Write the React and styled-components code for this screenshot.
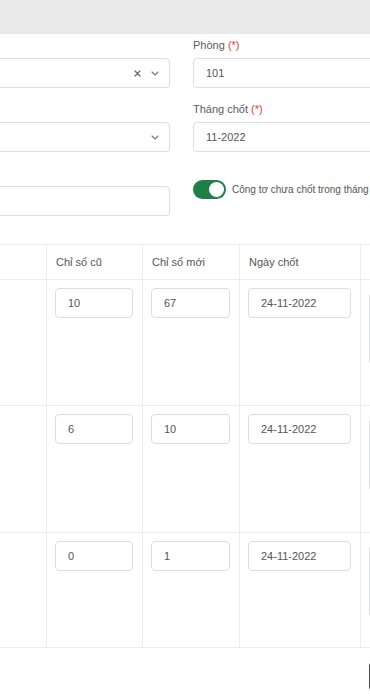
import React from "react";
import styled, { createGlobalStyle } from "styled-components";

const GlobalStyle = createGlobalStyle`
  html, body { margin: 0; padding: 0; background: #fff; overflow: hidden; }
  body { font-family: "Liberation Sans", Arial, sans-serif; color: #555; }
  * { box-sizing: border-box; }
`;

const TopBar = styled.div`
  height: 34px;
  background: #e9e9e9;
`;

const Content = styled.div`
  margin-left: -150px;
  width: 700px;
`;

const FormGrid = styled.div`
  display: grid;
  grid-template-columns: 320px 300px;
  column-gap: 23px;
  row-gap: 14px;
  padding-top: 4px;
`;

const Field = styled.div`
  display: flex;
  flex-direction: column;
`;

const Label = styled.div`
  height: 14px;
  line-height: 14px;
  font-size: 11px;
  color: #5c5c5c;
  margin-bottom: 6px;
`;

const Req = styled.span`
  color: #e53935;
`;

const Box = styled.div`
  height: 30px;
  border: 1px solid #dcdde3;
  border-radius: 4px;
  background: #fff;
  display: flex;
  align-items: center;
  padding: 0 12px;
  font-size: 11px;
  color: #555;
`;

const BoxText = styled.span`
  flex: 1;
`;

const Icons = styled.span`
  display: flex;
  align-items: center;
  gap: 10px;
  color: #777;
  margin-right: -2px;
`;

const ToggleRow = styled.div`
  display: flex;
  align-items: center;
  gap: 6px;
  margin-top: 14px;
`;

const Switch = styled.span`
  width: 33px;
  height: 19px;
  border-radius: 10px;
  background: #1f7f47;
  display: flex;
  align-items: center;
  justify-content: flex-end;
  padding: 0 2px;
`;

const Knob = styled.span`
  width: 15px;
  height: 15px;
  border-radius: 50%;
  background: #fff;
`;

const ToggleText = styled.span`
  font-size: 10px;
  color: #555;
  white-space: nowrap;
`;

const Table = styled.table`
  margin-top: 28px;
  border-collapse: collapse;
  table-layout: fixed;
  width: 700px;
`;

const Th = styled.th`
  height: 35px;
  border: 1px solid #ececf1;
  text-align: left;
  font-weight: normal;
  font-size: 11px;
  color: #555;
  padding: 0 9px;
`;

const Tr = styled.tr`
  height: ${(p) => p.$h}px;
`;

const Td = styled.td`
  border: 1px solid #ececf1;
  vertical-align: top;
  padding: 8px 9px 8px 8px;
`;

const CellInput = styled(Box)`
  width: 100%;
`;

const Note = styled.div`
  margin-top: 4px;
  height: 73px;
  border: 1px solid #dcdde3;
  border-radius: 4px;
`;

const Footer = styled.div`
  display: flex;
  padding-top: 15px;
  padding-left: 519px;
`;

const DarkButton = styled.div`
  width: 80px;
  height: 27px;
  border-radius: 3px;
  background: #4a4a4a;
`;

const Chevron = () => (
  <svg width="8" height="5" viewBox="0 0 8 5" fill="none">
    <path d="M1 1l3 3 3-3" stroke="#777" strokeWidth="1.1" strokeLinecap="round" strokeLinejoin="round" />
  </svg>
);

const Cross = () => (
  <svg width="7" height="7" viewBox="0 0 7 7" fill="none">
    <path d="M1 1l5 5M6 1L1 6" stroke="#666" strokeWidth="1.2" strokeLinecap="round" />
  </svg>
);

const rows = [
  { old: "10", now: "67", date: "24-11-2022", h: 126 },
  { old: "6", now: "10", date: "24-11-2022", h: 127 },
  { old: "0", now: "1", date: "24-11-2022", h: 115 },
];

export default function App() {
  return (
    <>
      <GlobalStyle />
      <TopBar />
      <Content>
        <FormGrid>
          <Field>
            <Label />
            <Box>
              <BoxText />
              <Icons>
                <Cross />
                <Chevron />
              </Icons>
            </Box>
          </Field>
          <Field>
            <Label>
              Phòng <Req>(*)</Req>
            </Label>
            <Box>
              <BoxText>101</BoxText>
            </Box>
          </Field>
          <Field>
            <Label />
            <Box>
              <BoxText />
              <Icons>
                <Chevron />
              </Icons>
            </Box>
          </Field>
          <Field>
            <Label>
              Tháng chốt <Req>(*)</Req>
            </Label>
            <Box>
              <BoxText>11-2022</BoxText>
            </Box>
          </Field>
          <Field>
            <Label />
            <Box />
          </Field>
          <Field>
            <ToggleRow>
              <Switch>
                <Knob />
              </Switch>
              <ToggleText>Công tơ chưa chốt trong tháng</ToggleText>
            </ToggleRow>
          </Field>
        </FormGrid>
        <Table>
          <colgroup>
            <col style={{ width: 196 }} />
            <col style={{ width: 96 }} />
            <col style={{ width: 97 }} />
            <col style={{ width: 121 }} />
            <col />
          </colgroup>
          <thead>
            <tr>
              <Th />
              <Th>Chỉ số cũ</Th>
              <Th>Chỉ số mới</Th>
              <Th>Ngày chốt</Th>
              <Th />
            </tr>
          </thead>
          <tbody>
            {rows.map((r, i) => (
              <Tr key={i} $h={r.h}>
                <Td />
                <Td>
                  <CellInput>{r.old}</CellInput>
                </Td>
                <Td>
                  <CellInput>{r.now}</CellInput>
                </Td>
                <Td>
                  <CellInput>{r.date}</CellInput>
                </Td>
                <Td>
                  <Note />
                </Td>
              </Tr>
            ))}
          </tbody>
        </Table>
        <Footer>
          <DarkButton />
        </Footer>
      </Content>
    </>
  );
}
